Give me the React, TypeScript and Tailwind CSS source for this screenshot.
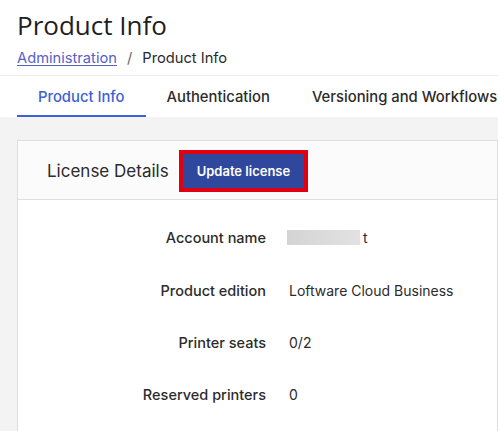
const rows = [
  { label: "Account name", value: "st", redacted: true },
  { label: "Product edition", value: "Loftware Cloud Business" },
  { label: "Printer seats", value: "0/2" },
  { label: "Reserved printers", value: "0" },
];

export default function App() {
  return (
    <div className="h-[431px] w-[498px] overflow-hidden bg-white font-['Inter',sans-serif] text-[#2b2b2b]">
      {/* page header */}
      <div className="px-[17px] pt-[7px]">
        <h1 className="font-['Open_Sans',sans-serif] text-[26px] leading-[36px] text-[#1f1f1f]">Product Info</h1>
        <div className="mt-[5px] flex items-center gap-[10px] text-[14.7px] leading-[20px]">
          <a className="text-[#5661c6] underline underline-offset-2">Administration</a>
          <span className="text-[#666]">/</span>
          <span>Product Info</span>
        </div>
      </div>

      {/* tabs */}
      <div className="mt-[7px] flex border-t border-[#ececec] pl-[17px] text-[14.8px] font-medium whitespace-nowrap">
        <div className="border-b-2 border-[#3b62d4] px-[21px] pt-[10px] pb-[7px] text-[#3b62d4]">Product Info</div>
        <div className="px-[21px] pt-[10px] pb-[7px]">Authentication</div>
        <div className="px-[21px] pt-[10px] pb-[7px]">Versioning and Workflows</div>
      </div>

      {/* content */}
      <div className="h-full bg-[#f3f3f3] pt-[23px] pl-[17px]">
        <div className="border border-[#dedede] bg-white">
          <div className="flex items-center gap-[10px] border-b border-[#dedede] bg-[#fbfbfb] px-[29px] pt-[9px] pb-[7px]">
            <span className="pt-[2px] text-[17px]">License Details</span>
            <div className="border-4 border-[#e0000f]">
              <button className="bg-[#2f479d] px-[14px] py-[8px] text-[13px] leading-[18px] font-semibold text-white">
                Update license
              </button>
            </div>
          </div>
          <div className="pt-[27px]">
            {rows.map((r) => (
              <div key={r.label} className="flex h-[52.4px] items-start text-[14px]">
                <div className="w-[248px] text-right text-[14.5px] font-medium">{r.label}</div>
                <div className="ml-[23px]">
                  {r.redacted ? (
                    <span className="flex items-center">
                      <span className="-ml-[2px] h-[15px] w-[73px] bg-gradient-to-r from-[#d4d4d4] to-[#e2e2e2]" />
                      <span className="ml-[3px]">t</span>
                    </span>
                  ) : (
                    r.value
                  )}
                </div>
              </div>
            ))}
          </div>
        </div>
      </div>
    </div>
  );
}
